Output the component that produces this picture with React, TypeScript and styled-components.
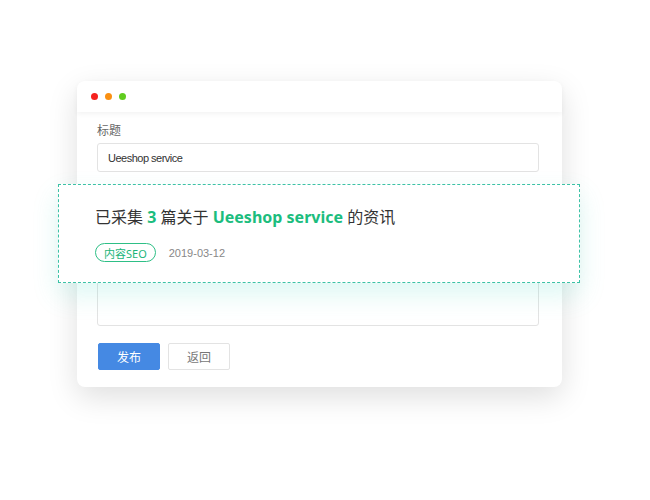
import styled, { createGlobalStyle } from "styled-components";

const GlobalStyle = createGlobalStyle`
  html, body {
    margin: 0;
    padding: 0;
    background: #ffffff;
    font-family: "Noto Sans", "Noto Sans CJK SC", sans-serif;
  }
`;

const Stage = styled.div`
  width: 650px;
  height: 500px;
  padding: 81px 0 0 77px;
  box-sizing: border-box;
`;

const Window = styled.div`
  position: relative;
  width: 485px;
  height: 306px;
  background: #fff;
  border-radius: 8px;
  box-shadow: 0 10px 30px rgba(0, 0, 0, 0.13);
  display: flex;
  flex-direction: column;
`;

const TitleBar = styled.div`
  height: 31px;
  display: flex;
  align-items: center;
  gap: 7px;
  padding-left: 14px;
  border-radius: 8px 8px 0 0;
  box-shadow: 0 2px 5px rgba(0, 0, 0, 0.05);
`;

const Dot = styled.span<{ $color: string }>`
  width: 7px;
  height: 7px;
  border-radius: 50%;
  background: ${(p) => p.$color};
`;

const Body = styled.div`
  flex: 1;
  display: flex;
  flex-direction: column;
  padding: 10px 23px 17px 20px;
`;

const Field = styled.div`
  display: flex;
  flex-direction: column;
  gap: 4px;
  margin-bottom: 16px;
`;

const Label = styled.div`
  font-size: 12px;
  line-height: 17px;
  color: #666;
`;

const Input = styled.div`
  height: 29px;
  box-sizing: border-box;
  border: 1px solid #e3e3e3;
  border-radius: 3px;
  padding: 0 10px;
  display: flex;
  align-items: center;
  font-family: "Liberation Sans", "Noto Sans CJK SC", sans-serif;
  font-size: 11px;
  letter-spacing: -0.5px;
  color: #333;
`;

const TextArea = styled.div`
  height: 117px;
  box-sizing: border-box;
  border: 1px solid #e3e3e3;
  border-radius: 3px;
`;

const Actions = styled.div`
  display: flex;
  gap: 8px;
  margin-top: 1px;
  padding-left: 1px;
`;

const Button = styled.div<{ $primary?: boolean }>`
  width: 62px;
  height: 27px;
  box-sizing: border-box;
  display: flex;
  align-items: center;
  justify-content: center;
  font-size: 12px;
  border-radius: 2px;
  background: ${(p) => (p.$primary ? "#4589e3" : "#fff")};
  color: ${(p) => (p.$primary ? "#fff" : "#777")};
  border: 1px solid ${(p) => (p.$primary ? "#4589e3" : "#e3e3e3")};
`;

const Popup = styled.div`
  position: absolute;
  left: -19px;
  top: 103px;
  width: 522px;
  height: 99px;
  box-sizing: border-box;
  background: #fff;
  border: 1px dashed #3cc2a6;
  padding: 20px 36px;
  box-shadow: 0 12px 24px rgba(70, 215, 195, 0.18);
`;

const Headline = styled.div`
  font-size: 16px;
  line-height: 24px;
  color: #333;
`;

const Em = styled.b`
  color: #1cbd7e;
  font-weight: 700;
`;

const Meta = styled.div`
  display: flex;
  align-items: center;
  margin-top: 14px;
`;

const Tag = styled.span`
  height: 19px;
  box-sizing: border-box;
  padding: 0 8px;
  border: 1px solid #2ebf86;
  border-radius: 10px;
  display: flex;
  align-items: center;
  font-size: 11px;
  color: #1cb57a;
`;

const DateText = styled.span`
  margin-left: 13px;
  font-family: "Liberation Sans", sans-serif;
  font-size: 11px;
  color: #888;
`;

export default function App() {
  return (
    <>
      <GlobalStyle />
      <Stage>
        <Window>
          <TitleBar>
            <Dot $color="#f5221e" />
            <Dot $color="#fa9012" />
            <Dot $color="#60cc1e" />
          </TitleBar>
          <Body>
            <Field>
              <Label>标题</Label>
              <Input>Ueeshop service</Input>
            </Field>
            <Field>
              <Label>内容</Label>
              <TextArea />
            </Field>
            <Actions>
              <Button $primary>发布</Button>
              <Button>返回</Button>
            </Actions>
          </Body>
          <Popup>
            <Headline>
              已采集 <Em>3</Em> 篇关于 <Em>Ueeshop service</Em> 的资讯
            </Headline>
            <Meta>
              <Tag>内容SEO</Tag>
              <DateText>2019-03-12</DateText>
            </Meta>
          </Popup>
        </Window>
      </Stage>
    </>
  );
}
